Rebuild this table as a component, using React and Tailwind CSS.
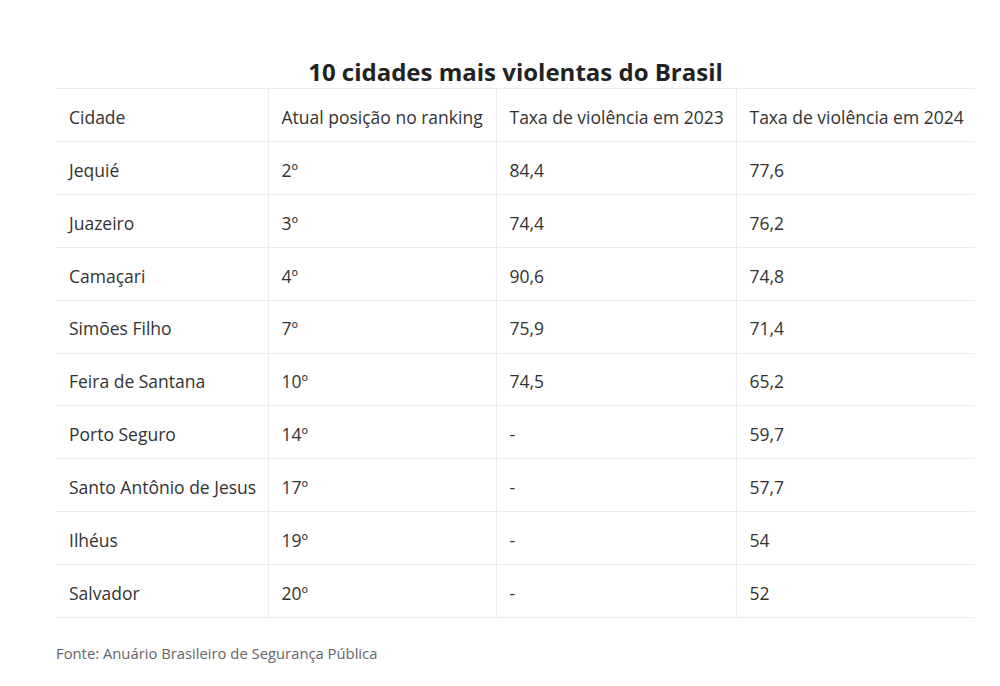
export default function App() {
  const rows = [
    ["Jequié", "2º", "84,4", "77,6"],
    ["Juazeiro", "3º", "74,4", "76,2"],
    ["Camaçari", "4º", "90,6", "74,8"],
    ["Simões Filho", "7º", "75,9", "71,4"],
    ["Feira de Santana", "10º", "74,5", "65,2"],
    ["Porto Seguro", "14º", "-", "59,7"],
    ["Santo Antônio de Jesus", "17º", "-", "57,7"],
    ["Ilhéus", "19º", "-", "54"],
    ["Salvador", "20º", "-", "52"],
  ];
  const widths = ["w-[212px]", "w-[228px]", "w-[240px]", "w-[239px]"];
  const head = ["Cidade", "Atual posição no ranking", "Taxa de violência em 2023", "Taxa de violência em 2024"];

  return (
    <div className="min-h-[686px] bg-white font-['Open_Sans',sans-serif] text-[#333]">
      <div className="w-[919px] ml-[56px] pt-[55px]">
        <h2 className="text-center text-[24px] font-bold leading-[33px] text-[#222]">
          10 cidades mais violentas do Brasil
        </h2>
        <table className="border-collapse table-fixed w-full text-[17.5px]">
          <thead>
            <tr className="border-y border-[#ececec]">
              {head.map((h, i) => (
                <td
                  key={i}
                  className={`${widths[i]} h-[53px] pl-[13px] pt-[4px] align-middle ${i > 0 ? "border-l border-[#ececec]" : ""}`}
                >
                  {h}
                </td>
              ))}
            </tr>
          </thead>
          <tbody>
            {rows.map((r, ri) => (
              <tr key={ri} className="border-b border-[#ececec]">
                {r.map((c, i) => (
                  <td
                    key={i}
                    className={`h-[52.9px] pl-[13px] pt-[4px] align-middle ${i > 0 ? "border-l border-[#ececec]" : ""}`}
                  >
                    {c}
                  </td>
                ))}
              </tr>
            ))}
          </tbody>
        </table>
        <p className="mt-[24px] text-[14.8px] text-[#666]">Fonte: Anuário Brasileiro de Segurança Pública</p>
      </div>
    </div>
  );
}
